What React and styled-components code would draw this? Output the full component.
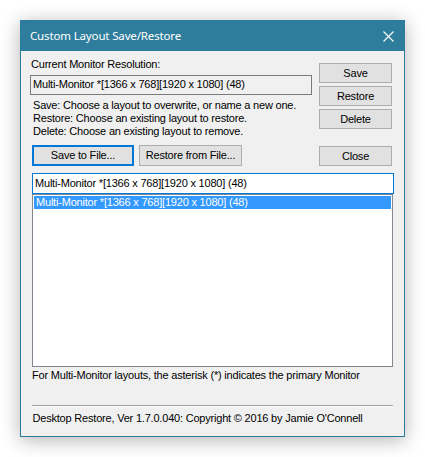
import React from "react";
import styled, { createGlobalStyle } from "styled-components";

const Global = createGlobalStyle`
  html, body { margin: 0; padding: 0; background: #ffffff; }
  * { box-sizing: border-box; }
`;

const Page = styled.div`
  padding: 20px;
  width: 425px;
  height: 457px;
  font-family: "Liberation Sans", Arial, sans-serif;
`;

const Window = styled.div`
  width: 385px;
  height: 417px;
  border: 1px solid #2b7b9c;
  background: #f0f0f0;
  box-shadow: 0 3px 18px rgba(0, 0, 0, 0.3);
  display: flex;
  flex-direction: column;
`;

const TitleBar = styled.div`
  height: 30px;
  background: #2e7d9c;
  display: flex;
  align-items: center;
  justify-content: space-between;
  padding: 0 10px 0 9px;
  flex-shrink: 0;
`;

const Title = styled.div`
  color: #ffffff;
  font-family: "Noto Sans", "Open Sans", sans-serif;
  font-size: 11.5px;
  letter-spacing: -0.15px;
  margin-top: -1px;
`;

const CloseX = styled.svg`
  display: block;
`;

const Client = styled.div`
  flex: 1;
  display: flex;
  flex-direction: column;
  font-size: 11px;
  letter-spacing: -0.2px;
  line-height: 13px;
  color: #000;
`;

const TopRow = styled.div`
  display: flex;
  padding-left: 9px;
`;

const LeftCol = styled.div`
  width: 282px;
  display: flex;
  flex-direction: column;
`;

const RightCol = styled.div`
  margin-left: 7px;
  padding-top: 12px;
  display: flex;
  flex-direction: column;
  gap: 3px;
`;

const Label = styled.div`
  margin-top: 7px;
  padding-left: 1px;
`;

const ReadBox = styled.div`
  margin-top: 4px;
  height: 20px;
  border: 1px solid #7a7a7a;
  background: #f0f0f0;
  padding: 2px 0 0 2px;
  white-space: nowrap;
`;

const Help = styled.div`
  margin-top: 3.5px;
  padding-left: 3px;
`;

const Button = styled.button`
  font: inherit;
  letter-spacing: inherit;
  color: #000;
  width: ${(p) => p.$w}px;
  height: ${(p) => p.$h || 20}px;
  background: #e1e1e1;
  border: ${(p) => (p.$focus ? "2px solid #0078d7" : "1px solid #adadad")};
  padding: 0;
  margin: 0;
  display: flex;
  align-items: center;
  justify-content: center;
`;

const ButtonRow = styled.div`
  margin-top: 7.5px;
  display: flex;
  align-items: flex-start;
  padding: 0 12px 0 11px;
`;

const FileButtons = styled.div`
  display: flex;
  gap: 5px;
`;

const Spacer = styled.div`
  flex: 1;
`;

const CloseButtonWrap = styled.div`
  padding-top: 1px;
`;

const Combo = styled.div`
  margin: 7px 10px 0 11px;
  height: 21px;
  border: 1px solid #0078d7;
  background: #ffffff;
  padding: 3px 0 0 2px;
  white-space: nowrap;
`;

const List = styled.div`
  margin: 0 11px 0 11px;
  height: 173px;
  border: 1px solid #828790;
  background: #ffffff;
  padding: 1px;
`;

const ListItem = styled.div`
  height: 13px;
  padding-left: 2px;
  white-space: nowrap;
  background: ${(p) => (p.$selected ? "#3399ff" : "transparent")};
  color: ${(p) => (p.$selected ? "#ffffff" : "#000")};
`;

const Note = styled.div`
  margin: 1.5px 0 0 11px;
`;

const Separator = styled.div`
  margin: 23px 11px 0 11px;
  height: 2px;
  border-top: 1px solid #a0a0a0;
  border-bottom: 1px solid #ffffff;
`;

const Version = styled.div`
  margin: 5.5px 0 0 11.5px;
`;

const entry = "Multi-Monitor *[1366 x 768][1920 x 1080] (48)";

export default function App() {
  return (
    <>
      <Global />
      <Page>
        <Window>
          <TitleBar>
            <Title>Custom Layout Save/Restore</Title>
            <CloseX width="11" height="11" viewBox="0 0 11 11">
              <path d="M0.5 0.5 L10.5 10.5 M10.5 0.5 L0.5 10.5" stroke="#ffffff" strokeWidth="1.1" fill="none" />
            </CloseX>
          </TitleBar>
          <Client>
            <TopRow>
              <LeftCol>
                <Label>Current Monitor Resolution:</Label>
                <ReadBox>{entry}</ReadBox>
                <Help>
                  Save: Choose a layout to overwrite, or name a new one.
                  <br />
                  Restore: Choose an existing layout to restore.
                  <br />
                  Delete: Choose an existing layout to remove.
                </Help>
              </LeftCol>
              <RightCol>
                <Button $w={73}>Save</Button>
                <Button $w={73}>Restore</Button>
                <Button $w={73}>Delete</Button>
              </RightCol>
            </TopRow>
            <ButtonRow>
              <FileButtons>
                <Button $w={102} $h={21} $focus>Save to File...</Button>
                <Button $w={103} $h={21}>Restore from File...</Button>
              </FileButtons>
              <Spacer />
              <CloseButtonWrap>
                <Button $w={73}>Close</Button>
              </CloseButtonWrap>
            </ButtonRow>
            <Combo>{entry}</Combo>
            <List>
              <ListItem $selected>{entry}</ListItem>
            </List>
            <Note>For Multi-Monitor layouts, the asterisk (*) indicates the primary Monitor</Note>
            <Separator />
            <Version>Desktop Restore, Ver 1.7.0.040: Copyright © 2016 by Jamie O'Connell</Version>
          </Client>
        </Window>
      </Page>
    </>
  );
}
